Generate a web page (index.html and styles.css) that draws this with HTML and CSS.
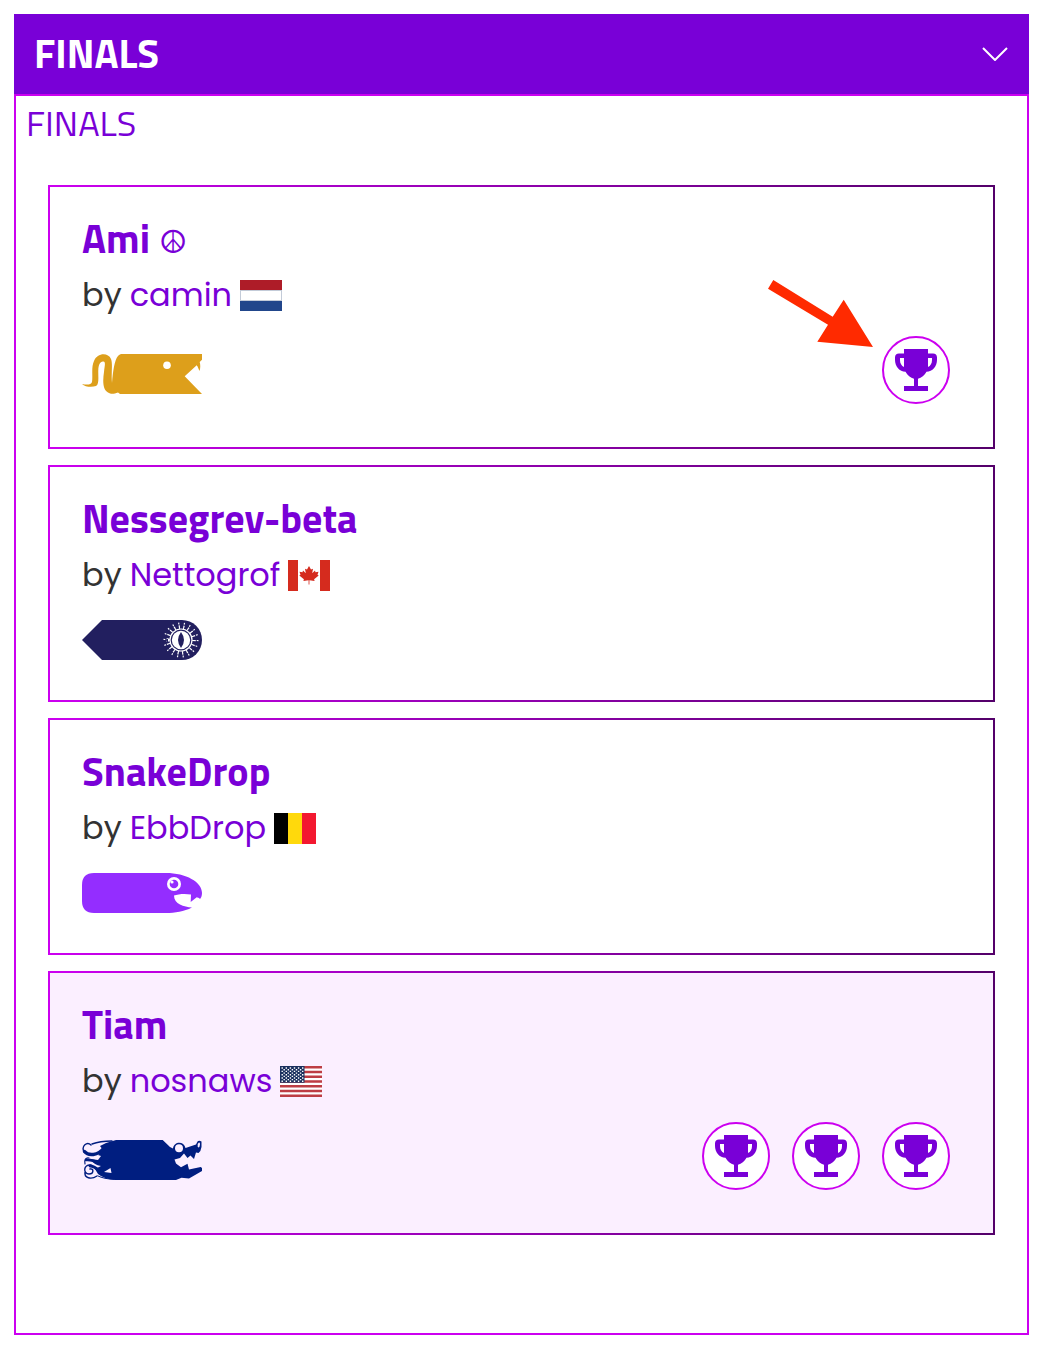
FILE: index.html
```html
<!DOCTYPE html>
<html lang="en">
<head>
<meta charset="utf-8">
<meta name="viewport" content="width=device-width, initial-scale=1">
<title>Finals</title>
<link rel="stylesheet" href="styles.css">
</head>
<body>
<svg class="sprite" aria-hidden="true">
  <symbol id="trophy" viewBox="0 0 42 42">
    <path fill-rule="evenodd" d="M9 0H33V4.6H38C40.5 4.6 42 6 42 8.5V11C42 17.5 37.5 22.5 31.5 22.8C29.5 26.5 26.5 29 23 29.8V37H33V42H9V37H19V29.8C15.500 29 12.500 26.500 10.500 22.800C4.500 22.500 0 17.500 0 11V8.500C0 6 1.500 4.600 4 4.600H9ZM9 9H5V11C5 14.500 6.500 16.800 9 18ZM33 9H37V11C37 14.500 35.500 16.800 33 18Z"/>
  </symbol>
</svg>
<main class="accordion">
  <h2 class="accordion-heading">
    <button class="accordion-toggle" type="button" aria-expanded="true" aria-controls="finals-panel">
      <span>FINALS</span>
      <svg class="chevron" viewBox="0 0 26 14" aria-hidden="true"><path d="M1 1L13 13L25 1"/></svg>
    </button>
  </h2>
  <section class="panel" id="finals-panel">
    <h3 class="panel-title">FINALS</h3>
    <div class="cards">
      <article class="card">
        <h4 class="snake-name">Ami <span class="peace">☮</span></h4>
        <p class="author">by <a href="#camin">camin</a>
          <svg class="flag" viewBox="0 0 42 31" role="img" aria-label="Netherlands"><path fill="#c3cbd8" d="M0 0h42v31H0z"/><path fill="#fff" d="M1 11h40v9H1z"/><path fill="#ae1c28" d="M0 0h42v10H0z"/><path fill="#21468b" d="M0 21h42v10H0z"/></svg>
        </p>
        <div class="card-footer">
          <svg class="snake" viewBox="0 0 120 40" aria-hidden="true">
            <path fill="#dd9f1b" d="M0 30C5 31 9 31 10 28C11 22 9 13 12 7C15 -1 26 -2 29 5C31 10 29 20 30 29C31 17 32.500 6 36 2C37.500 .5 38.500 0 40 0H120V5.700L117.700 8C118.500 11 118.500 14 117.500 17C116.500 15 116 13 114.700 11.300L102.700 22.300L120 40H38L36 38.500C32 40 29 40.500 26 38.500C20 35 21 25 22 18C22.500 12 24 8 21.500 7.500C18 7 16.500 11 16.300 16C16 22 17.500 30 14 32C10 33.500 3 33 0 30Z"/>
            <circle cx="85" cy="11.300" r="3.800" fill="#fff"/>
          </svg>
          <div class="trophies"><span class="trophy"><svg><use href="#trophy"/></svg></span></div>
        </div>
        <svg class="arrow" viewBox="0 0 105 67" aria-hidden="true"><path d="M5.300 0L64.700 36.700L75.700 19.700L105 67L49.300 61.700L60 44.700L0 8.700Z"/></svg>
      </article>
      <article class="card">
        <h4 class="snake-name">Nessegrev-beta</h4>
        <p class="author">by <a href="#nettogrof">Nettogrof</a>
          <svg class="flag" viewBox="0 0 42 31" role="img" aria-label="Canada"><path fill="#fff" d="M0 0h42v31H0z"/><path fill="#d52b1e" d="M0 0h10v31H0zM32 0h10v31H32zM21 6l-2 3.500-2-.8.8 4.500-2.800-2.600-.5 1.600-3-.5 1 3-1.200.8 4.600 3.800-.5 1.700 5.200-.7v4.200h.8v-4.200l5.200.7-.5-1.700 4.600-3.800-1.200-.8 1-3-3 .5-.5-1.600-2.800 2.600.8-4.500-2 .8z"/></svg>
        </p>
        <div class="card-footer">
          <svg class="snake" viewBox="0 0 120 40" aria-hidden="true">
            <path fill="#221f5f" d="M20 0H100A20 20 0 0 1 100 40H20L0 20Z"/>
            <g fill="none" stroke="#fff">
              <circle cx="99" cy="20" r="11" stroke-width="1.200"/>
              <circle cx="99" cy="20" r="13" stroke-width="3.600" pathLength="180" stroke-dasharray="2.600 7.400"/>
              <circle cx="99" cy="20" r="16.600" stroke-width="1.800" pathLength="180" stroke-dasharray="2 8"/>
            </g>
            <circle cx="99" cy="20" r="9.200" fill="#fff"/>
            <path fill="#221f5f" d="M99 12Q105 20 99 28Q93 20 99 12Z"/>
          </svg>
        </div>
      </article>
      <article class="card">
        <h4 class="snake-name">SnakeDrop</h4>
        <p class="author">by <a href="#ebbdrop">EbbDrop</a>
          <svg class="flag" viewBox="0 0 42 31" role="img" aria-label="Belgium"><path d="M0 0h14v31H0z"/><path fill="#ffd90c" d="M14 0h14v31H14z"/><path fill="#f31830" d="M28 0h14v31H28z"/></svg>
        </p>
        <div class="card-footer">
          <svg class="snake" viewBox="0 0 120 40" aria-hidden="true">
            <path fill="#942dff" d="M12 0H84C104 0 120 9 120 20C120 23 119 25 118 26L117 25L114.700 24.300L108.700 29L109 21.500C103 20.500 96 21 92 22.500C92 31 102 34 110 34.500C102 38.500 93 40 84 40H12Q0 40 0 28V12Q0 0 12 0Z"/>
            <circle cx="92" cy="11" r="7" fill="#fff"/><circle cx="92" cy="11" r="4.300" fill="#942dff"/><circle cx="90" cy="9" r="1.600" fill="#fff"/>
          </svg>
        </div>
      </article>
      <article class="card winner">
        <h4 class="snake-name">Tiam</h4>
        <p class="author">by <a href="#nosnaws">nosnaws</a>
          <svg class="flag" viewBox="0 0 42 31" role="img" aria-label="United States"><path fill="#fff" d="M0 0h42v31H0z"/><path stroke="#bd3d44" stroke-width="2.400" d="M0 1.200h42M0 6h42M0 10.700h42M0 15.500h42M0 20.300h42M0 25h42M0 29.800h42"/><path fill="#192f5d" d="M0 0h24.500v16.700H0z"/><path stroke="#fff" stroke-width="1.400" stroke-dasharray="1.400 2.700" d="M1.500 2h22M3.500 3.700h19M1.500 5.400h22M3.500 7.100h19M1.500 8.700h22M3.500 10.400h19M1.500 12h22M3.500 13.600h19M1.500 15.200h22"/></svg>
        </p>
        <div class="card-footer">
          <svg class="snake" viewBox="0 0 120 40" aria-hidden="true">
            <path fill="#001e80" fill-rule="evenodd" d="M34 0H80.700L88 7L91 8.500C92 1 102 1 103.500 8L114 4.500L115.500 1.500Q117 0 119.500 1.500V7Q119 11 116.500 13L114 12.500L112 19L108.500 15.500L105.500 18L102 13.500L98 18L92.500 19.500L94 23.500L99 27.300L105.500 23.700L107 29.500L118.700 27L120 28V31L107 38.500L99.500 37.700L94 40H33Q22 39 16 34L13 29L19 26Q12 25 8 19L16 20L19 16L16 15L21 10L18 6L24 3ZM115.700 4Q118 1 118 4.500Q117.500 8.500 115.700 7ZM22 32L28.500 28L29.500 33Z"/>
            <circle cx="97" cy="8.300" r="4" fill="#fbefff"/>
            <g fill="none" stroke="#001e80" stroke-linecap="round">
              <path stroke-width="1.400" d="M10 4Q18 1 30 1"/>
              <path stroke-width="3.400" d="M22 8C16 16 6 16 2.500 11.500"/>
              <path stroke-width="1.400" d="M2 12C-1 6 5 1 9 5"/>
              <path stroke-width="2.600" d="M17 22C12 22 9 19 4 20"/>
              <path stroke-width="1.200" d="M3 24C2 20 4 17 7 18"/>
              <path stroke-width="2.800" d="M20 33C16 30 13 26 8 26"/>
              <path stroke-width="1.400" d="M9 25C1 24 1 34 7 34C12 34 12 28 8 29M3 32C2 38 9 40 15 36"/>
              <path stroke-width="1" d="M16 36Q22 39 32 39.300"/>
            </g>
          </svg>
          <div class="trophies">
            <span class="trophy"><svg><use href="#trophy"/></svg></span>
            <span class="trophy"><svg><use href="#trophy"/></svg></span>
            <span class="trophy"><svg><use href="#trophy"/></svg></span>
          </div>
        </div>
      </article>
    </div>
  </section>
</main>
</body>
</html>
```
FILE: styles.css
```css
:root {
  --purple: #7900d7;
  --pink: #cc00f0;
  --dark: #54006a;
  --heading: "Titillium Web", "Open Sans", sans-serif;
  --text: "Poppins", "Inter", sans-serif;
}

* {
  box-sizing: border-box;
}

body {
  margin: 14px 13px 11px 14px;
  background: #fff;
  color: #333;
  font: 32px/48px var(--text);
}

h2, h3, h4, p {
  margin: 0;
}

a {
  color: var(--purple);
  text-decoration: none;
}

.sprite {
  display: block;
  width: 0;
  height: 0;
}

.accordion-toggle {
  display: flex;
  align-items: center;
  justify-content: space-between;
  width: 100%;
  height: 80px;
  padding: 0 20px;
  border: 0;
  background: var(--purple);
  color: #fff;
  font: 700 40px/60px var(--heading);
  cursor: pointer;
}

.chevron {
  width: 28px;
  height: 14px;
  fill: none;
  stroke: #fff;
  stroke-width: 2;
}

.panel {
  padding: 0 32px 98px;
  border: 2px solid var(--pink);
}

.panel-title {
  margin: 0 -22px 35px;
  color: var(--purple);
  font: 400 36px/54px var(--heading);
}

.cards {
  display: grid;
  gap: 16px;
}

.card {
  position: relative;
  padding: 32px;
  border: 2px solid;
  border-image: linear-gradient(to right, var(--pink), var(--dark)) 1;
}

.winner {
  background: #fbefff;
}

.snake-name {
  color: var(--purple);
  font: 700 40px/40px var(--heading);
}

.peace {
  font: 32px/20px "DejaVu Sans", sans-serif;
}

.author {
  display: flex;
  align-items: center;
  gap: 8px;
  padding: 12px 0 6px;
}

.flag {
  width: 42px;
  height: 31px;
}

.card-footer {
  display: flex;
  align-items: center;
  justify-content: space-between;
}

.snake {
  box-sizing: content-box;
  width: 120px;
  height: 40px;
  padding: 15px 0 8px;
}

.trophies {
  display: flex;
  gap: 22px;
  padding: 11px;
}

.trophy {
  display: grid;
  place-items: center;
  width: 68px;
  height: 68px;
  border: 2px solid var(--pink);
  border-radius: 50%;
  background: #fff;
}

.trophy svg {
  width: 42px;
  height: 42px;
  fill: var(--purple);
}

.arrow {
  position: absolute;
  top: 93px;
  right: 120px;
  width: 105px;
  height: 67px;
  fill: #ff2a00;
}
```
